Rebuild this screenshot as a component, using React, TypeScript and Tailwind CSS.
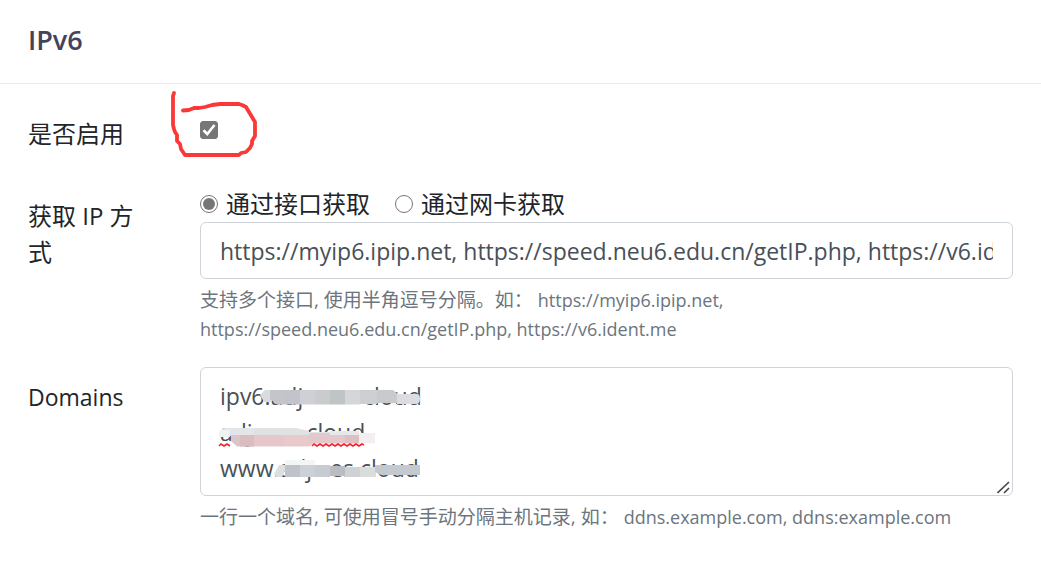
import React from "react";

const latin = "text-[23px]";

function Row({ label, children }: { label: React.ReactNode; children: React.ReactNode }) {
  return (
    <div className="grid grid-cols-[116px_minmax(0,1fr)] gap-14">
      <div className="py-3 text-2xl/9">{label}</div>
      <div className="relative min-w-0">{children}</div>
    </div>
  );
}

function Pen() {
  return (
    <svg
      className="pointer-events-none absolute -left-8 -top-4 h-20 w-24"
      viewBox="168 88 96 80"
      fill="none"
      stroke="#fb3838"
      strokeWidth="3.8"
      strokeLinecap="round"
      strokeLinejoin="round"
      aria-hidden="true"
    >
      <path d="M174 93 L173 96 V125 L174 129 L175 132 L177 135 L177 141 L180 144 L181 149 L183 152 L185 155 H239 L241 153 L246 152 L250 148 L252 144 L252 141 L255 136 V126 L255 122 L252 117 L249 112 L246 107 L242 105 L239 104 H220 L212 105 L205 107 L199 108 L194 108 L189 110 L183 110.5" />
    </svg>
  );
}

function Mosaic() {
  return (
    <svg
      className="pointer-events-none absolute left-0 top-0 h-32 w-60"
      viewBox="200 367 240 128"
      aria-hidden="true"
    >
      <path d="M260 395 L265 390 H272 V402 H264 Z" fill="#d9dcde" />
      <path d="M270 390 H284 V404.500 H277 L270 399 Z" fill="#c3c5c9" />
      <path d="M284 390 H300 V404.500 H284 Z" fill="#c2c3cb" />
      <path d="M300 390 H315 V404.500 H300 Z" fill="#cfd0d5" />
      <path d="M315 390 H330 V404.500 H315 Z" fill="#cacbcd" />
      <path d="M330 390 H345 V404.500 H330 Z" fill="#bfc4c5" />
      <path d="M345 390 H360 V404.500 H345 Z" fill="#d4d6da" />
      <path d="M360 390 H377 V404 H360 Z" fill="#cdcfd2" />
      <path d="M377 390 H393 L398 394 V403 H377 Z" fill="#c8cacc" />
      <path d="M397 394 H417 Q420 394 420 399 Q420 404 416 404 H397 Z" fill="#dcdce3" />
      <path d="M219 434 Q220 429 225 428 H296 L309 432 H341 L359 434 V436 H219 Z" fill="#e3e6e8" />
      <path d="M219 434 L221 430 H230 V437 H219 Z" fill="#f0f2f2" />
      <path d="M254 428 H296 L309 431 V435 H254 Z" fill="#dfe1e3" />
      <path d="M231 435 H254 V446.500 H237 L231 441 Z" fill="#dcc5c8" />
      <path d="M240 435 H254 V446.500 H240 Z" fill="#d9bdc1" />
      <path d="M254 435 H284 V446.500 H254 Z" fill="#e5c6ca" />
      <path d="M284 435 H320 L313 443 L310 446.500 H284 Z" fill="#e8c9cc" />
      <path d="M309 433 H345 V443.500 H312 Z" fill="#e3c8cc" />
      <path d="M345 433 H360 V443.500 H345 Z" fill="#dec0c4" />
      <path d="M330 431 H359 V435 H330 Z" fill="#e7e8ea" />
      <path d="M359 433 H375 V443.500 H359 Z" fill="#f3eff1" />
      <path d="M274 474 L279 465 H285 V471 L282 477 H276 Z" fill="#dadfdf" />
      <path d="M285 460 H315 V466 H285 Z" fill="#f2f6f7" />
      <path d="M285 465 H300 V477 H285 Z" fill="#bfc2c7" />
      <path d="M300 465 H315 V477 H300 Z" fill="#cbd1d7" />
      <path d="M315 465 H330 V477 H315 Z" fill="#c8cbd1" />
      <path d="M330 466 H345 V476 H330 Z" fill="#b9bcc2" />
      <path d="M345 467 H360 V477 H345 Z" fill="#cfd2d4" />
      <path d="M360 467 H376 V477 H360 Z" fill="#dadddd" />
      <path d="M375 465 H420 V475 H381 L375 472 Z" fill="#c4c9cf" />
      <path
        d="M219 446 l2 -2 l3 2 l3 -2 l3 2 M312 446 l2 -2 l3 2 l3 -2 l3 2 l3 -2 l3 2 l3 -2 l3 2 l3 -2 l3 2 l3 -2 l3 2 l3 -2 l3 2 l3 -2 l3 2 l3 -2 l2 1"
        fill="none"
        stroke="#f5222d"
        strokeWidth="1.6"
      />
    </svg>
  );
}

function Grip() {
  return (
    <svg
      className="pointer-events-none absolute bottom-0.5 right-0.5 size-3.5"
      viewBox="0 0 14 14"
      fill="none"
      stroke="#4a4a4e"
      strokeWidth="1.7"
      aria-hidden="true"
    >
      <path d="M0.500 13 L12 2 M7 13 L12 8" />
    </svg>
  );
}

const radio =
  "size-[18px] appearance-none rounded-full border-[1.5px] border-[#767676] bg-white p-0.5 checked:bg-[#767676] checked:bg-clip-content";
const field =
  "block w-full rounded-md border border-[#ced4da] bg-white px-[19px] text-[#495057] outline-none";
const help = "pb-px pt-[7px] text-[19px]/[29px] text-[#6c757d]";

export default function App() {
  return (
    <main className="min-h-screen bg-white font-['Open_Sans','Noto_Sans_CJK_SC',sans-serif] text-[#212529]">
      <header className="border-b border-[#e9ecef] px-7 pb-6 pt-5">
        <h1 className="text-[27px]/[39px] font-semibold text-[#43435c]">IPv6</h1>
      </header>
      <form className="flex flex-col gap-[22px] px-7 pt-5">
        <Row label={<label htmlFor="enable">是否启用</label>}>
          <div className="pt-[17px]">
            <span className="relative block size-[18px]">
              <input
                id="enable"
                type="checkbox"
                defaultChecked
                className="peer block size-[18px] appearance-none rounded-[3px] border border-[#767676] checked:bg-[#767676]"
              />
              <svg
                className="pointer-events-none absolute inset-0 hidden size-[18px] peer-checked:block"
                viewBox="0 0 18 18"
                fill="none"
                stroke="white"
                strokeWidth="2.600"
                aria-hidden="true"
              >
                <path d="M3.500 9.300 L7.300 13 L14.500 4" />
              </svg>
            </span>
            <Pen />
          </div>
        </Row>
        <Row label={<label htmlFor="urls">获取 IP 方式</label>}>
          <div role="radiogroup" aria-label="获取 IP 方式" className="flex gap-[25px] text-2xl/9">
            <label className="flex items-center gap-2">
              <input type="radio" name="method" defaultChecked className={radio} />
              通过接口获取
            </label>
            <label className="flex items-center gap-2">
              <input type="radio" name="method" className={radio} />
              通过网卡获取
            </label>
          </div>
          <input
            id="urls"
            type="text"
            defaultValue="https://myip6.ipip.net, https://speed.neu6.edu.cn/getIP.php, https://v6.ident.me"
            className={`${field} h-[57px] text-[23px]`}
          />
          <p className={help}>
            支持多个接口, 使用半角逗号分隔。如：{" "}
            <span className="text-lg/7">
              https://myip6.ipip.net, https://speed.neu6.edu.cn/getIP.php, https://v6.ident.me
            </span>
          </p>
        </Row>
        <Row label={<label htmlFor="domains" className={latin}>Domains</label>}>
          <div className="relative">
            <textarea
              id="domains"
              rows={3}
              spellCheck={false}
              defaultValue={"ipv6.adj          cloud\nadj         cloud\nwww.adj   es.cloud"}
              className={`${field} h-[129px] resize-none overflow-hidden py-[10px] text-[23px]/9`}
            />
            <Mosaic />
            <Grip />
          </div>
          <p className={help}>
            一行一个域名, 可使用冒号手动分隔主机记录, 如：{" "}
            <span className="text-lg/7">ddns.example.com, ddns:example.com</span>
          </p>
        </Row>
      </form>
    </main>
  );
}
